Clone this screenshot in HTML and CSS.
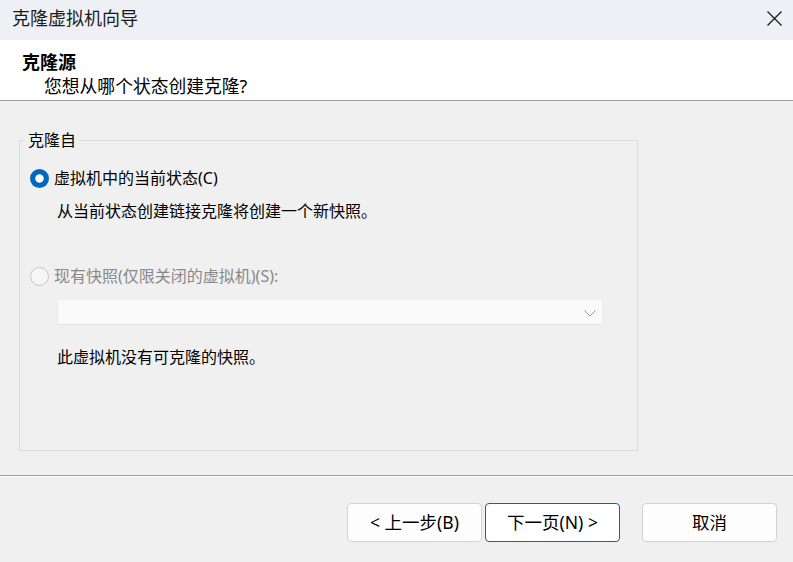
FILE: index.html
```html
<!DOCTYPE html>
<html lang="zh-CN">
<head>
<meta charset="utf-8">
<title>克隆虚拟机向导</title>
<link rel="stylesheet" href="styles.css">
</head>
<body>
<div class="window">
  <div class="titlebar">
    <span class="title">克隆虚拟机向导</span>
    <span class="close">
      <svg width="15" height="15" viewBox="0 0 15 15"><path d="M0.5 0.5 L14.5 14.5 M14.5 0.5 L0.5 14.5" stroke="#1b1b1b" stroke-width="1.3" fill="none"/></svg>
    </span>
  </div>
  <div class="header">
    <div class="heading">克隆源</div>
    <div class="subtitle">您想从哪个状态创建克隆?</div>
  </div>
  <div class="content">
    <fieldset class="group">
      <legend class="legend">克隆自</legend>
      <div class="radio-row">
        <span class="radio checked"></span>
        <span class="radio-label">虚拟机中的当前状态(C)</span>
      </div>
      <div class="desc first-desc">从当前状态创建链接克隆将创建一个新快照。</div>
      <div class="radio-row second-row">
        <span class="radio disabled"></span>
        <span class="radio-label muted">现有快照(仅限关闭的虚拟机)(S):</span>
      </div>
      <div class="combo">
        <svg class="chevron" width="12" height="7" viewBox="0 0 12 7"><path d="M0.5 0.5 L6 6 L11.5 0.5" stroke="#9c9c9c" stroke-width="1" fill="none"/></svg>
      </div>
      <div class="desc last-desc">此虚拟机没有可克隆的快照。</div>
    </fieldset>
  </div>
  <div class="footer">
    <button class="btn">&lt; 上一步(B)</button>
    <button class="btn primary">下一页(N) &gt;</button>
    <button class="btn cancel">取消</button>
  </div>
</div>
</body>
</html>
```
FILE: styles.css
```css
html, body {
  margin: 0;
  padding: 0;
}
body {
  width: 793px;
  height: 562px;
  overflow: hidden;
  background: #f0f0f0;
  font-family: "Noto Sans", "Noto Sans CJK SC", sans-serif;
  color: #000;
}
.window {
  display: flex;
  flex-direction: column;
  height: 562px;
}
.titlebar {
  height: 40px;
  background: #eef0f6;
  display: flex;
  align-items: flex-start;
  justify-content: space-between;
  box-sizing: border-box;
  padding: 7px 12px 0 12px;
}
.title {
  font-size: 18px;
  line-height: 22px;
  color: #1a1a1a;
}
.close {
  display: flex;
  margin-top: 4px;
  margin-right: -1px;
}
.header {
  height: 60px;
  background: #fff;
  border-bottom: 1px solid #a0a0a0;
}
.heading {
  font-size: 18px;
  font-weight: bold;
  line-height: 22px;
  padding-top: 11px;
  padding-left: 22px;
}
.subtitle {
  font-size: 17.8px;
  line-height: 24px;
  margin-top: 1px;
  padding-left: 44px;
}
.content {
  padding-left: 19px;
}
.group {
  width: 619px;
  box-sizing: border-box;
  margin: 29px 0 0 0;
  border: 1px solid #dcdcdc;
  padding: 18px 0 83px 10px;
  display: flex;
  flex-direction: column;
  align-items: flex-start;
}
.legend {
  font-size: 16px;
  line-height: 20px;
  padding: 0 3px;
  margin-left: -5px;
}
.radio-row {
  display: flex;
  align-items: center;
  height: 20px;
  font-size: 16px;
  line-height: 20px;
}
.radio {
  width: 19px;
  height: 19px;
  border-radius: 50%;
  box-sizing: border-box;
  margin-right: 5px;
  flex: none;
}
.radio.checked {
  background: radial-gradient(circle at center, #fff 0, #fff 3.8px, #0067c0 4.6px);
}
.radio.disabled {
  border: 1px solid #c6c6c6;
  background: #f6f6f6;
}
.muted {
  color: #888;
}
.desc {
  font-size: 16px;
  line-height: 20px;
  padding-left: 27px;
}
.first-desc {
  margin-top: 13px;
}
.second-row {
  margin-top: 45px;
}
.combo {
  margin-top: 13px;
  margin-left: 27px;
  width: 546px;
  height: 26px;
  box-sizing: border-box;
  background: #fafafa;
  border: 1px solid #ececec;
  border-bottom-color: #e2e2e2;
  border-radius: 2px;
  display: flex;
  align-items: center;
  justify-content: flex-end;
  padding-right: 6px;
}
.chevron {
  margin-top: 2px;
}
.last-desc {
  margin-top: 22px;
}
.footer {
  margin-top: 24px;
  border-top: 1px solid #a0a0a0;
  box-shadow: inset 0 1px 0 #fff;
  padding: 27px 16px 0 0;
  display: flex;
  justify-content: flex-end;
  gap: 3px;
}
.btn {
  width: 135px;
  height: 39px;
  box-sizing: border-box;
  background: #fdfdfd;
  border: 1px solid #d3d3d3;
  border-radius: 4px;
  font-family: "Noto Sans", "Noto Sans CJK SC", sans-serif;
  font-size: 17.5px;
  color: #000;
  padding: 0 0 1px 0;
  line-height: 22px;
}
.btn.primary {
  border-color: #0067c0;
  background: #fff;
}
.btn.cancel {
  margin-left: 19px;
}
```
